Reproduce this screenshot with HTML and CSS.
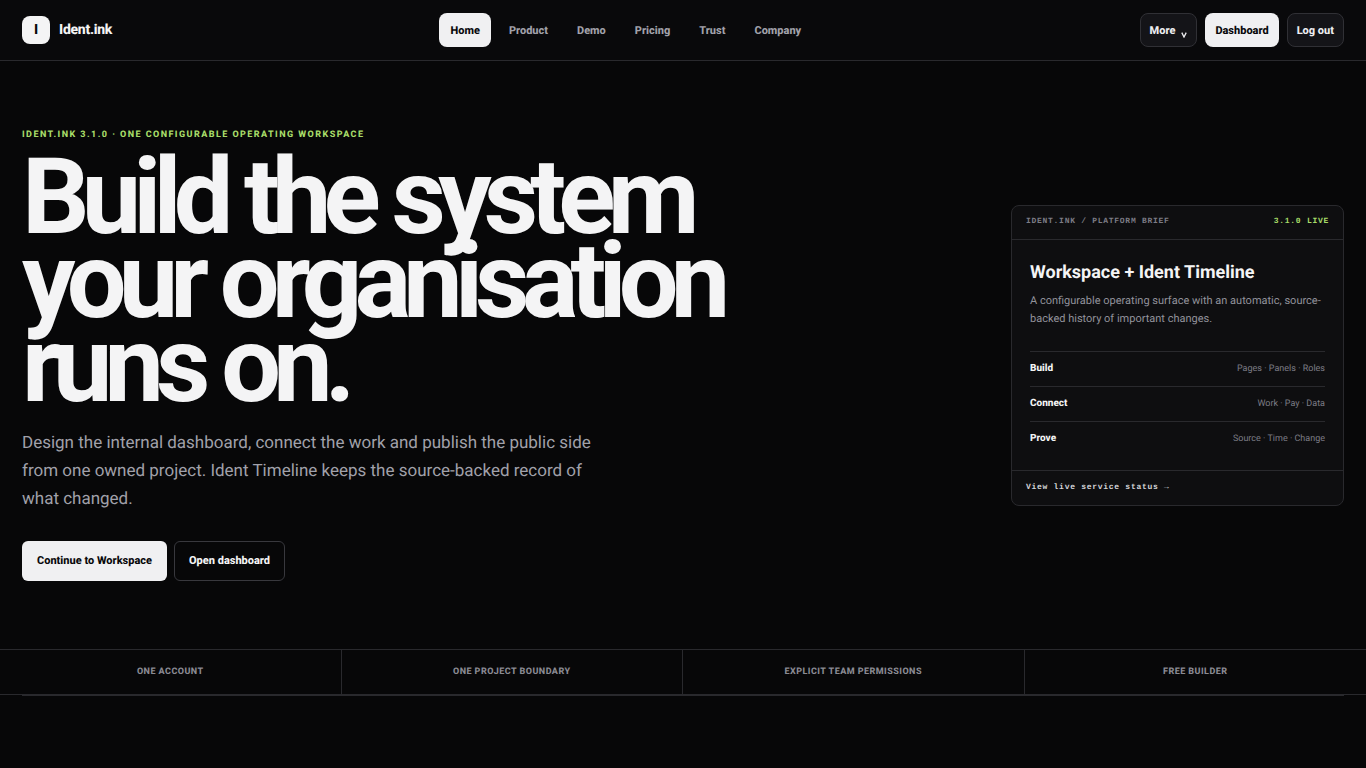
FILE: index.html
```html
<!DOCTYPE html>
<html lang="en">
<head>
<meta charset="utf-8">
<meta name="viewport" content="width=device-width, initial-scale=1">
<title>Ident.ink</title>
<link rel="stylesheet" href="styles.css">
</head>
<body>
<header class="site-header">
  <a class="brand" href="#"><span class="brand-mark">I</span><span>Ident.ink</span></a>
  <nav class="nav" aria-label="Main">
    <a class="nav-link is-active" href="#" aria-current="page">Home</a>
    <a class="nav-link" href="#">Product</a>
    <a class="nav-link" href="#">Demo</a>
    <a class="nav-link" href="#">Pricing</a>
    <a class="nav-link" href="#">Trust</a>
    <a class="nav-link" href="#">Company</a>
  </nav>
  <div class="actions">
    <button class="btn btn-dark" type="button">More
      <svg class="chevron" width="6" height="6" viewBox="0 0 6 6" aria-hidden="true"><path d="M.8.6 3 5 5.200.6" fill="none" stroke="currentColor" stroke-width="1.300"/></svg>
    </button>
    <a class="btn btn-light" href="#">Dashboard</a>
    <button class="btn btn-dark" type="button">Log out</button>
  </div>
</header>
<main>
  <section class="hero">
    <div class="hero-copy">
      <p class="eyebrow">Ident.ink 3.1.0 · One configurable operating workspace</p>
      <h1 class="headline">Build the system your organisation runs on.</h1>
      <p class="lead">Design the internal dashboard, connect the work and publish the public side from one owned project. Ident Timeline keeps the source-backed record of what changed.</p>
      <div class="cta">
        <a class="btn btn-large btn-light" href="#">Continue to Workspace</a>
        <a class="btn btn-large btn-outline" href="#">Open dashboard</a>
      </div>
    </div>
    <aside class="brief">
      <div class="brief-head"><span>IDENT.INK / PLATFORM BRIEF</span><strong class="live">3.1.0 LIVE</strong></div>
      <div class="brief-body">
        <h2 class="brief-title">Workspace + Ident Timeline</h2>
        <p class="brief-text">A configurable operating surface with an automatic, source-backed history of important changes.</p>
        <dl class="facts">
          <div class="fact"><dt>Build</dt><dd>Pages · Panels · Roles</dd></div>
          <div class="fact"><dt>Connect</dt><dd>Work · Pay · Data</dd></div>
          <div class="fact"><dt>Prove</dt><dd>Source · Time · Change</dd></div>
        </dl>
      </div>
      <a class="brief-foot" href="#">View live service status →</a>
    </aside>
  </section>
  <ul class="strip">
    <li>One account</li>
    <li>One project boundary</li>
    <li>Explicit team permissions</li>
    <li>Free builder</li>
  </ul>
  <section class="next"></section>
</main>
</body>
</html>
```
FILE: styles.css
```css
:root {
  --bg: #070708;
  --line: #29292d;
  --light: #f0f0f2;
  --muted: #a1a1aa;
  --dim: #7c7c85;
  --green: #a7dc69;
  --mono: "Liberation Mono", monospace;
}
* { box-sizing: border-box; }
body {
  margin: 0;
  min-height: 100vh;
  background: var(--bg);
  color: #f4f4f5;
  font-family: Roboto, sans-serif;
  text-rendering: geometricPrecision;
}
a { color: inherit; text-decoration: none; }
button { text-rendering: inherit; }
h1, h2, p, dl, dd, ul { margin: 0; padding: 0; }

.site-header {
  display: flex;
  align-items: center;
  justify-content: space-between;
  padding: 13px 22px;
  background: #09090b;
  border-bottom: 1px solid var(--line);
}
.brand {
  display: flex;
  align-items: center;
  gap: 9px;
  font-size: 14px;
  font-weight: 800;
  line-height: 18px;
  letter-spacing: -0.02em;
}
.brand-mark {
  display: grid;
  place-items: center;
  width: 28px;
  height: 28px;
  border-radius: 8px;
  background: #f4f4f5;
  color: #09090b;
}
.nav { display: flex; gap: 7px; }
.nav-link, .btn {
  display: inline-flex;
  align-items: center;
  height: 34px;
  border-radius: 8px;
  font-family: inherit;
  font-size: 11px;
  font-weight: 800;
}
.nav-link { padding: 0 11px; color: var(--muted); }
.is-active { background: var(--light); color: #09090b; }
.actions { display: flex; gap: 8px; }
.btn { border: 1px solid transparent; padding: 0 9px; }
.btn-light { background: var(--light); color: #09090b; }
.btn-dark { background: #141418; border-color: #303035; color: #ededf0; }
.btn-outline { border-color: #38383d; color: #f4f4f5; }
.btn-large { height: 40px; padding: 0 14px 2px; border-radius: 6px; }
.chevron { margin: 9px 0 0 6px; }

.hero {
  display: grid;
  grid-template-columns: minmax(0, 1fr) 333px;
  align-items: center;
  gap: 64px;
  padding: 68px 22px;
}
.eyebrow {
  margin-bottom: 14px;
  color: var(--green);
  font-size: 9px;
  font-weight: 800;
  line-height: 12px;
  letter-spacing: 0.16em;
  text-transform: uppercase;
}
.headline {
  max-width: 800px;
  font-size: 106px;
  font-weight: 700;
  line-height: 84px;
  letter-spacing: -0.074em;
}
.lead {
  max-width: 590px;
  margin-top: 22px;
  color: var(--muted);
  font-size: 17px;
  line-height: 28px;
}
.cta { display: flex; gap: 7px; margin-top: 28px; }

.brief {
  border: 1px solid var(--line);
  border-radius: 8px;
  background: #0e0e10;
}
.brief-head, .brief-foot {
  display: flex;
  justify-content: space-between;
  padding: 10px 14px 11px;
  font-family: var(--mono);
  font-size: 8px;
  font-weight: 700;
  line-height: 12px;
  letter-spacing: 0.09em;
}
.brief-head { border-bottom: 1px solid var(--line); color: var(--dim); }
.live { color: var(--green); }
.brief-foot { border-top: 1px solid var(--line); padding-top: 11px; color: #d4d4d8; }
.brief-body { padding: 20px 18px 14px; }
.brief-title { font-size: 18px; font-weight: 700; line-height: 26px; }
.brief-text {
  margin-top: 6px;
  color: #92929b;
  font-size: 11px;
  line-height: 18px;
}
.facts { margin-top: 23px; }
.fact {
  display: flex;
  align-items: center;
  justify-content: space-between;
  height: 35px;
  border-top: 1px solid var(--line);
}
.fact dt { font-size: 10px; font-weight: 800; }
.fact dd { color: var(--dim); font-size: 9px; }

.strip {
  display: grid;
  grid-template-columns: repeat(4, 1fr);
  border: solid var(--line);
  border-width: 1px 0;
  list-style: none;
}
.strip li {
  padding: 16px 12px;
  border-right: 1px solid var(--line);
  color: #8a8a93;
  font-size: 9px;
  font-weight: 800;
  line-height: 12px;
  letter-spacing: 0.05em;
  text-align: center;
  text-transform: uppercase;
}
.strip li:last-child { border-right: 0; }
.next { margin: 0 22px; border-top: 1px solid var(--line); }
```
